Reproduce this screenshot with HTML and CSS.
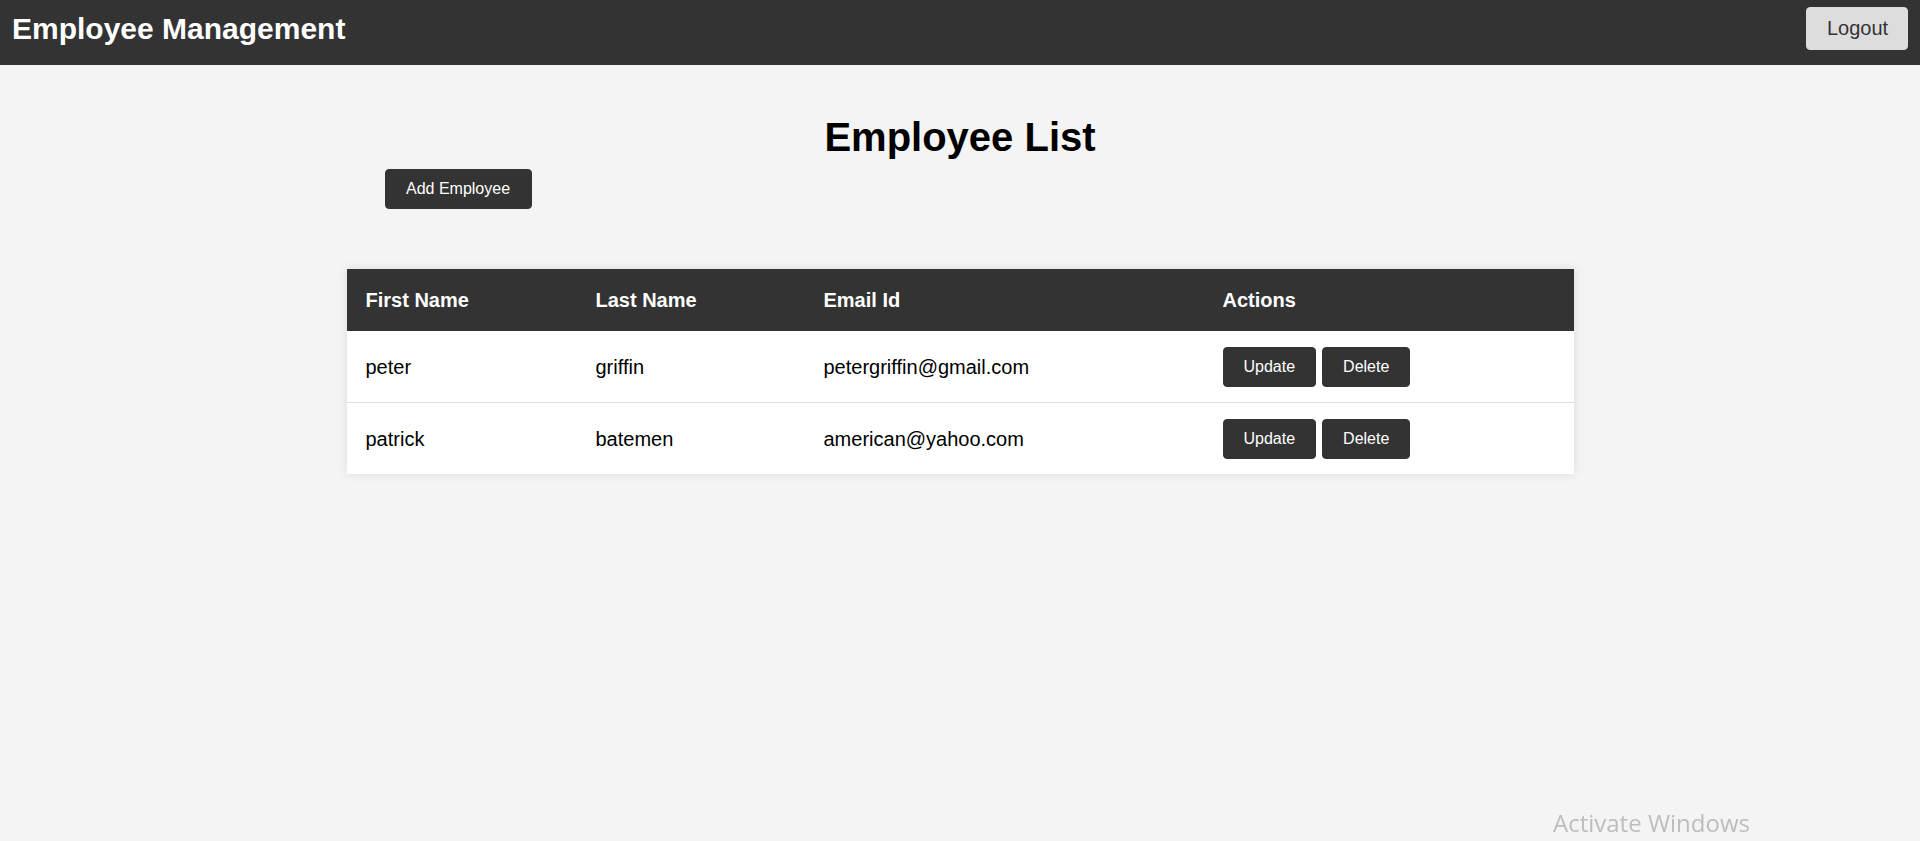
FILE: index.html
```html
<!DOCTYPE html>
<html lang="en">
<head>
<meta charset="utf-8">
<title>Employee Management</title>
<link rel="stylesheet" href="styles.css">
</head>
<body>
<header class="topbar">
  <div class="brand">Employee Management</div>
  <button class="logout">Logout</button>
</header>
<main class="content">
  <h2 class="page-title">Employee List</h2>
  <div class="toolbar">
    <button class="btn">Add Employee</button>
  </div>
  <table class="emp-table">
    <colgroup>
      <col class="c1"><col class="c2"><col class="c3"><col class="c4">
    </colgroup>
    <thead>
      <tr><th>First Name</th><th>Last Name</th><th>Email Id</th><th>Actions</th></tr>
    </thead>
    <tbody>
      <tr>
        <td>peter</td><td>griffin</td><td>petergriffin@gmail.com</td>
        <td><div class="actions"><button class="btn">Update</button><button class="btn">Delete</button></div></td>
      </tr>
      <tr>
        <td>patrick</td><td>batemen</td><td>american@yahoo.com</td>
        <td><div class="actions"><button class="btn">Update</button><button class="btn">Delete</button></div></td>
      </tr>
    </tbody>
  </table>
</main>
<div class="watermark">Activate Windows</div>
</body>
</html>
```

FILE: styles.css
```css
* { box-sizing: border-box; }
html, body { margin: 0; padding: 0; }
body {
  background: #f4f4f4;
  font-family: "Liberation Sans", Arial, sans-serif;
  color: #000;
  height: 841px;
  overflow: hidden;
}
.topbar {
  height: 65px;
  background: #333;
  display: flex;
  align-items: center;
  justify-content: space-between;
  padding: 7px 12px 15px 12px;
}
.brand {
  color: #fff;
  font-weight: bold;
  font-size: 30px;
  line-height: 43px;
}
.logout {
  font-family: "Liberation Sans", Arial, sans-serif;
  font-size: 20px;
  line-height: 21px;
  padding: 10px 20px;
  background: #ddd;
  color: #333;
  border: 1px solid #ddd;
  border-radius: 4px;
  width: 102px;
  height: 43px;
}
.content {
  width: 1227px;
  margin: 0 auto;
}
.page-title {
  margin: 49px 0 9px 0;
  font-size: 40px;
  line-height: 46px;
  text-align: center;
  font-weight: bold;
}
.toolbar {
  padding-left: 38px;
}
.btn {
  font-family: "Liberation Sans", Arial, sans-serif;
  font-size: 16px;
  line-height: 18px;
  padding: 10px 20px;
  background: #333;
  color: #fff;
  border: 1px solid #333;
  border-radius: 4px;
  height: 40px;
}
.toolbar .btn { width: 147px; }
.emp-table {
  margin-top: 60px;
  width: 1227px;
  border-collapse: collapse;
  table-layout: fixed;
  background: #fff;
  box-shadow: 0 0 10px rgba(0, 0, 0, 0.1);
}
.c1 { width: 230px; }
.c2 { width: 228px; }
.c3 { width: 399px; }
.c4 { width: 370px; }
.emp-table th {
  background: #333;
  color: #fff;
  font-size: 20px;
  line-height: 22px;
  font-weight: bold;
  text-align: left;
  padding: 20px 19px;
}
.emp-table td {
  font-size: 20px;
  line-height: 23px;
  padding: 16px 19px 15px 19px;
  border-bottom: 1px solid #ddd;
}
.emp-table tbody tr:last-child td { border-bottom: none; }
.actions {
  display: flex;
  gap: 6px;
}
.watermark {
  position: fixed;
  left: 1553px;
  top: 806px;
  font-family: "Open Sans", "Noto Sans", sans-serif;
  font-size: 24px;
  color: #bdbdbd;
  white-space: nowrap;
}
```
